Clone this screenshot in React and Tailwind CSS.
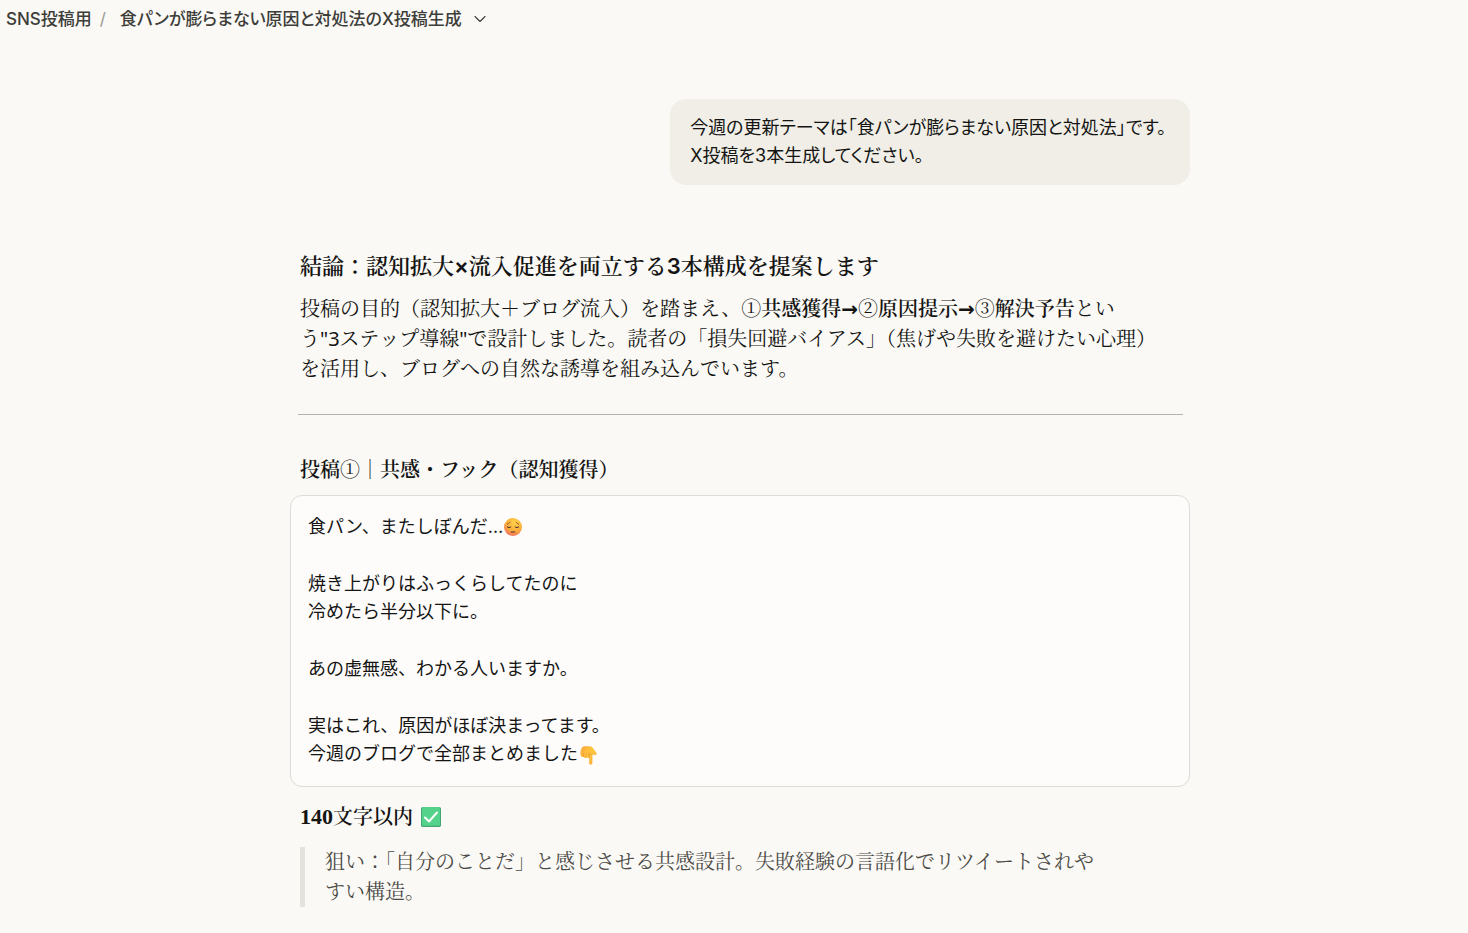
import { ChevronDown } from 'lucide-react';

const postParagraphs = [
  { lines: ['食パン、またしぼんだ…'], emoji: 'pensive' },
  { lines: ['焼き上がりはふっくらしてたのに', '冷めたら半分以下に。'] },
  { lines: ['あの虚無感、わかる人いますか。'] },
  { lines: ['実はこれ、原因がほぼ決まってます。', '今週のブログで全部まとめました'], emoji: 'down' },
];

const steps = [
  ['①', '共感獲得'],
  ['②', '原因提示'],
  ['③', '解決予告'],
];

function PensiveFace() {
  return (
    <svg role="img" aria-label="😔" viewBox="0 0 20 20" className="inline-block w-5 h-5 align-[-4px]">
      <defs>
        <radialGradient id="face" cx="0.6" cy="0.25" r="0.8">
          <stop offset="0" stopColor="#ffd24a" />
          <stop offset="0.6" stopColor="#fbae3c" />
          <stop offset="1" stopColor="#ee6a5c" />
        </radialGradient>
      </defs>
      <circle cx="10" cy="10" r="9" fill="url(#face)" />
      <path d="M4.4 7c1.2-.3 2-.8 2.5-1.8M15.6 7c-1.2-.3-2-.8-2.5-1.8" fill="none" stroke="#8a4a2a" strokeWidth="0.9" strokeLinecap="round" />
      <path d="M4.2 9.8c.8 1 2.8 1.1 3.7.1M12.1 9.9c.9 1 2.9.9 3.7-.1" fill="none" stroke="#4a2a35" strokeWidth="1" strokeLinecap="round" />
      <path d="M8.2 15h3.6" stroke="#4a2a35" strokeWidth="1.1" strokeLinecap="round" />
    </svg>
  );
}

function PointingDown() {
  return (
    <svg role="img" aria-label="👇" viewBox="0 0 20 20" className="inline-block w-5 h-5 align-[-5px]">
      <defs>
        <linearGradient id="hand" x1="0" y1="0" x2="1" y2="1">
          <stop offset="0" stopColor="#f9a43c" />
          <stop offset="0.5" stopColor="#ffc83d" />
          <stop offset="1" stopColor="#f9a03f" />
        </linearGradient>
      </defs>
      <path d="M6.6 1.2h4.6c2.1 0 3.2.8 4 2.3l3.1 4.2c.7 1.1.2 2.3-.9 2.4l-3-.5v8.2c0 2.6-3.3 2.6-3.3 0v-5.4c-.7.8-2.2.9-2.9.2-.8.6-2.2.4-2.7-.6-1.3.2-2.5-.4-2.8-1.6-.5-2.3-.4-4.3.6-6.5.6-1.7 1.5-2.7 3.3-2.7z" fill="url(#hand)" />
      <path d="M5.2 8.3l.2 3.2M8 8.6l.1 3.4M11 8.2v4.2M11 8.2c1.1.9 2.1 1.3 3.4 1.4" fill="none" stroke="#e8833a" strokeWidth="0.6" strokeLinecap="round" />
    </svg>
  );
}

function CheckMark() {
  return (
    <svg role="img" aria-label="✅" viewBox="0 0 20 20" className="inline-block w-5 h-5 ml-2 align-[-3px]">
      <rect width="20" height="20" rx="1.8" fill="#43a574" />
      <rect x="1" width="18" height="18.8" rx="1.3" fill="#54d28b" />
      <path d="M4 10.5l4 4 8-9" fill="none" stroke="#fff" strokeWidth="2" strokeLinecap="round" strokeLinejoin="round" />
    </svg>
  );
}

function Header() {
  return (
    <header className="flex items-center h-[38px] px-1.5 text-[17px] leading-6 font-medium text-[#3d3d3a] font-['Inter','Noto_Sans_CJK_JP',sans-serif]">
      <nav aria-label="breadcrumb" className="flex items-center [font-feature-settings:'palt']">
        <a href="#project">SNS投稿用</a>
        <span className="w-7 pl-2 font-normal text-[#9a9893]">/</span>
        <a href="#chat">食パンが膨らまない原因と対処法のX投稿生成</a>
      </nav>
      <button type="button" aria-label="メニュー" className="ml-2">
        <ChevronDown className="w-5 h-5" strokeWidth={1.3} />
      </button>
    </header>
  );
}

function UserMessage() {
  return (
    <div className="self-end mt-[61px] pl-5 pr-6 pt-[15px] pb-[15px] rounded-2xl bg-[#f0eee6] text-[18px] leading-7 font-['Inter','Noto_Sans_CJK_JP',sans-serif] [font-feature-settings:'palt']">
      <p>今週の更新テーマは「食パンが膨らまない原因と対処法」です。</p>
      <p>X投稿を3本生成してください。</p>
    </div>
  );
}

function PostCard() {
  return (
    <div className="flex flex-col gap-[29px] -mx-2.5 mt-2.5 px-[17px] pt-[17px] pb-[18px] rounded-xl border border-[#dddcd8] bg-[#fdfcfb] text-[18px] leading-7 font-['Inter','Noto_Sans_CJK_JP',sans-serif]">
      {postParagraphs.map((p) => (
        <p key={p.lines[0]}>
          {p.lines.map((line, i) => (
            <span key={line} className="block h-7">
              {line}
              {i === p.lines.length - 1 && p.emoji === 'pensive' && <PensiveFace />}
              {i === p.lines.length - 1 && p.emoji === 'down' && <PointingDown />}
            </span>
          ))}
        </p>
      ))}
    </div>
  );
}

export default function App() {
  return (
    <div className="min-h-screen bg-[#faf9f5] text-[#141413]">
      <Header />
      <main className="pl-3">
        <div className="flex flex-col max-w-[900px] mx-auto pb-[26px]">
          <UserMessage />
          <article className="mt-[66px] px-2.5 text-[20px] leading-[30px] font-['Noto_Sans','Noto_Serif_CJK_JP','Noto_Sans_CJK_JP',serif]">
            <h2 className="text-[22px] font-semibold font-['Inter','Noto_Serif_CJK_JP',serif]">結論：認知拡大×流入促進を両立する3本構成を提案します</h2>
            <p className="mt-[13px]">
              投稿の目的（認知拡大＋ブログ流入）を踏まえ、
              <strong className="font-semibold">
                {steps.map(([num, label], i) => (
                  <span key={num}>
                    {i > 0 && <span className="font-['DejaVu_Sans',sans-serif]">→</span>}
                    <span className="font-normal">{num}</span>
                    {label}
                  </span>
                ))}
              </strong>
              とい
              <br />
              う"3ステップ導線"で設計しました。読者の「損失回避バイアス」（焦げや失敗を避けたい心理）
              <br />
              を活用し、ブログへの自然な誘導を組み込んでいます。
            </p>
            <hr className="mt-[30px] -ml-0.5 mr-[-3px] border-[#b5b3ad]" />
            <h3 className="mt-10 font-semibold">
              投稿<span className="font-normal">①｜</span>共感・フック（認知獲得）
            </h3>
            <PostCard />
            <p className="mt-[15px] h-[30px] font-semibold">
              <span className="font-['Liberation_Serif',serif] text-[22px] font-bold">140</span>文字以内
              <CheckMark />
            </p>
            <blockquote className="mt-[15px] pl-5 border-l-[5px] border-[#e3e2dd] text-[#4b4a46]">
              狙い：「自分のことだ」と感じさせる共感設計。失敗経験の言語化でリツイートされや
              <br />
              すい構造。
            </blockquote>
          </article>
        </div>
      </main>
    </div>
  );
}
